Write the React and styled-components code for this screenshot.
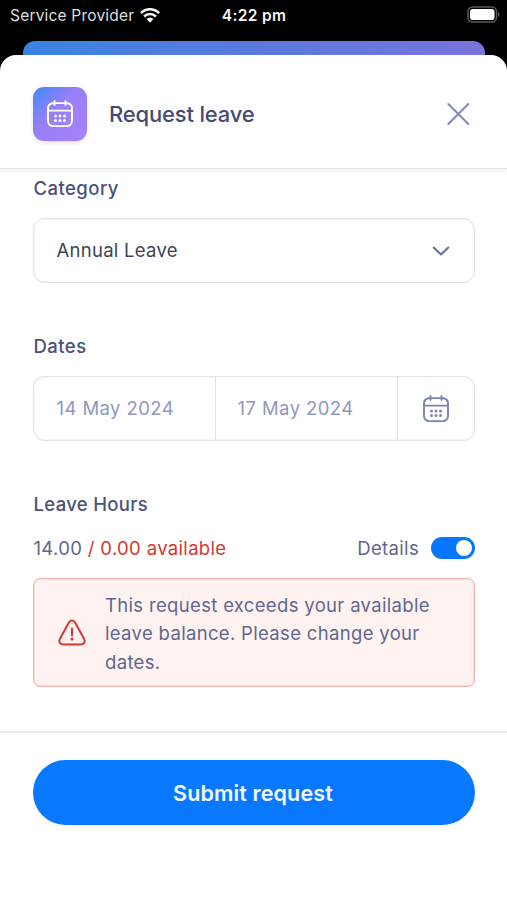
import React from "react";
import styled, { createGlobalStyle } from "styled-components";

const GlobalStyle = createGlobalStyle`
  *, *::before, *::after { box-sizing: border-box; }
  html, body { margin: 0; background: #000; }
  body, button { font-family: Inter, "Liberation Sans", sans-serif; }
`;

const Screen = styled.div`
  display: flex;
  flex-direction: column;
  height: 900px;
  overflow: hidden;
  background: #000;
`;

const StatusBar = styled.div`
  display: grid;
  grid-template-columns: 1fr auto 1fr;
  align-items: center;
  height: 30px;
  padding: 0 7px 0 10px;
  margin-bottom: 11px;
  color: #f4f4f4;
`;

const Carrier = styled.div`
  display: flex;
  align-items: center;
  gap: 6px;
  font-size: 15.5px;
  letter-spacing: 0.2px;
  line-height: 30px;
  white-space: nowrap;
  color: #dedede;
`;

const Clock = styled.div`
  font-size: 15.5px;
  font-weight: 600;
  letter-spacing: 0.35px;
  line-height: 30px;
  padding-top: 1px;
  margin-left: -2px;
`;

const Battery = styled.svg`
  justify-self: end;
  margin-top: -2px;
`;

const CardBehind = styled.div`
  flex: none;
  height: 14px;
  margin: 0 22px 0 23px;
  border-radius: 12px 12px 0 0;
  background: linear-gradient(90deg, #3983e2, #5a79dd 50%, #7974dc);
`;

const Sheet = styled.main`
  flex: 1;
  display: flex;
  flex-direction: column;
  border-radius: 16px 16px 0 0;
  background: #fff;
`;

const Header = styled.header`
  display: flex;
  align-items: center;
  flex: none;
  height: 114px;
  padding: 5px 37px 0 33px;
  border-bottom: 1px solid #e3e3e4;
  box-shadow: 0 3px 4px rgba(0, 0, 0, 0.06);
`;

const AppBadge = styled.div`
  display: grid;
  place-items: center;
  width: 54px;
  height: 54px;
  margin-right: 22px;
  border-radius: 11px;
  color: #fff;
  background: linear-gradient(135deg, #3b8cfd 0%, #977ff8 42%, #a683fb 100%);
  box-shadow: 0 2px 4px rgba(70, 40, 110, 0.14);
`;

const Title = styled.h1`
  flex: 1;
  margin: 0;
  font-size: 22px;
  font-weight: 500;
  letter-spacing: -0.18px;
  line-height: 30px;
  color: #444b73;
`;

const IconButton = styled.button`
  display: grid;
  place-items: center;
  padding: 0;
  border: 0;
  background: none;
  color: #7f88b4;
`;

const Form = styled.section`
  flex: none;
  height: 562px;
  padding: 7px 32px 0 33px;
`;

const Label = styled.h2`
  margin: 0 0 17px;
  padding-left: 0.5px;
  font-size: 18.5px;
  font-weight: 500;
  letter-spacing: ${(p) => p.$tracking || "0.45px"};
  line-height: 25px;
  color: #4b5279;
`;

const Field = styled.div`
  display: flex;
  height: 65px;
  margin-bottom: 51px;
  border: 1px solid #e3e3e9;
  border-radius: 11px;
  box-shadow: inset 0 0 0 1px #f6f6f8;
`;

const SelectValue = styled.div`
  flex: 1;
  padding-left: 22.5px;
  font-size: 18.5px;
  letter-spacing: 0.28px;
  line-height: 63px;
  color: #414355;
`;

const SelectArrow = styled.div`
  display: grid;
  place-items: center;
  width: 66px;
  color: #666ea0;
`;

const DateCell = styled.div`
  width: 182px;
  padding-left: ${(p) => (p.$end ? "21.5px" : "22.5px")};
  border-right: 1px solid #e2e2e9;
  font-size: 18.5px;
  letter-spacing: 0.42px;
  line-height: 63px;
  color: #8f98bd;
`;

const CalendarCell = styled.div`
  flex: 1;
  display: grid;
  place-items: center;
  color: #7984ae;
`;

const HoursRow = styled.div`
  display: flex;
  align-items: center;
  justify-content: space-between;
  height: 26px;
  margin: 18px 0 17px;
  padding-left: 0.5px;
  font-size: 18.5px;
  letter-spacing: 0.34px;
  color: #5f6689;
`;

const Shortage = styled.span`
  color: #d43732;
`;

const Details = styled.div`
  display: flex;
  align-items: center;
  gap: 12px;
`;

const Toggle = styled.span`
  display: flex;
  justify-content: flex-end;
  width: 44px;
  height: 22px;
  padding: 3px;
  border-radius: 11px;
  background: #0877ff;
`;

const Knob = styled.span`
  width: 16px;
  height: 16px;
  border-radius: 50%;
  background: #fff;
`;

const Alert = styled.div`
  display: flex;
  align-items: center;
  gap: 18px;
  height: 109px;
  padding: 0 23px;
  border: 1px solid #f6b3af;
  border-radius: 7px;
  background: #fff3f2;
  box-shadow: inset 0 0 0 1px #fcdcd9;
  color: #d43732;
`;

const AlertText = styled.p`
  margin: 0;
  padding-top: 2px;
  font-size: 18.5px;
  letter-spacing: 0.33px;
  line-height: 28.3px;
  white-space: nowrap;
  color: #5f6790;
`;

const Footer = styled.footer`
  flex: 1;
  padding: 27px 32px 0 33px;
  border-top: 2px solid #ebebec;
`;

const SubmitButton = styled.button`
  display: block;
  width: 100%;
  height: 65px;
  padding: 0 2px 0 0;
  border: 0;
  border-radius: 33px;
  background: #0878ff;
  color: #f4f9ff;
  font-size: 21.5px;
  font-weight: 600;
  letter-spacing: 0.13px;
`;

const CalendarIcon = () => (
  <svg width="28" height="30" viewBox="0 0 28 30" fill="none" stroke="currentColor" strokeWidth="1.9" strokeLinecap="round">
    <path d="M6.5 4.2C3.6 4.7 2 6.6 2 9.5v12c0 3.6 2 5.6 5.6 5.6h12.8c3.6 0 5.6-2 5.6-5.6v-12c0-2.9-1.6-4.8-4.5-5.3M6.5 4.2q.7-.1 1.5-.1h12q.8 0 1.5.1M2.2 11.6h23.6M8.5 2v4M19.5 2v4" />
    <g fill="currentColor" stroke="none">
      <circle cx="9.5" cy="16.9" r="1.5" /><circle cx="14" cy="16.9" r="1.5" /><circle cx="18.5" cy="16.9" r="1.5" />
      <circle cx="9.5" cy="21.4" r="1.5" /><circle cx="14" cy="21.4" r="1.5" /><circle cx="18.5" cy="21.4" r="1.5" />
    </g>
  </svg>
);

const WifiIcon = () => (
  <svg width="20" height="15" viewBox="0 0 20 15" fill="none" stroke="#f4f4f4" strokeWidth="2.5">
    <path d="M.9 5.1C6-.1 14-.1 19.1 5.1M4.1 8.5c3.3-3.3 8.5-3.3 11.8 0" />
    <path d="M6.5 11q3.5-3 7 0L10 14.7z" fill="#f4f4f4" stroke="none" />
  </svg>
);

export default function App() {
  return (
    <>
      <GlobalStyle />
      <Screen>
        <StatusBar>
          <Carrier>Service Provider <WifiIcon /></Carrier>
          <Clock>4:22 pm</Clock>
          <Battery width="33" height="17" viewBox="0 0 33 17" fill="none">
            <rect x="1" y="1" width="28.5" height="15" rx="4.5" stroke="#5a5a5a" strokeWidth="1.5" />
            <rect x="3" y="3" width="24.5" height="11" rx="2.8" fill="#fff" />
            <path d="M31 6v5q1.5-.7 1.5-2.5T31 6" fill="#5a5a5a" />
          </Battery>
        </StatusBar>
        <CardBehind />
        <Sheet>
          <Header>
            <AppBadge><CalendarIcon /></AppBadge>
            <Title>Request leave</Title>
            <IconButton aria-label="Close">
              <svg width="24" height="24" viewBox="0 0 24 24" fill="none" stroke="currentColor" strokeWidth="1.9" strokeLinecap="round">
                <path d="M2.3 2l20 20M22.3 2l-20 20" />
              </svg>
            </IconButton>
          </Header>
          <Form>
            <Label>Category</Label>
            <Field>
              <SelectValue>Annual Leave</SelectValue>
              <SelectArrow>
                <svg width="18" height="11" viewBox="0 0 18 11" fill="none" stroke="currentColor" strokeWidth="2" strokeLinecap="round" strokeLinejoin="round">
                  <path d="M1.7 2.5L9 9.5l7.3-7" />
                </svg>
              </SelectArrow>
            </Field>
            <Label>Dates</Label>
            <Field>
              <DateCell>14 May 2024</DateCell>
              <DateCell $end>17 May 2024</DateCell>
              <CalendarCell><CalendarIcon /></CalendarCell>
            </Field>
            <Label $tracking="0.32px">Leave Hours</Label>
            <HoursRow>
              <span>14.00 <Shortage>/ 0.00 available</Shortage></span>
              <Details>Details<Toggle><Knob /></Toggle></Details>
            </HoursRow>
            <Alert>
              <svg width="30" height="28" viewBox="0 0 30 28" fill="none" stroke="currentColor" strokeWidth="2" strokeLinecap="round">
                <path d="M12 3.3c1.5-2.5 4.5-2.5 6 0l9 16.5c1.6 2.9.1 5.7-3.2 5.7H6.2c-3.3 0-4.8-2.8-3.2-5.7z" />
                <path d="M15 9.5v7" />
                <circle cx="15" cy="20" r="1.5" fill="currentColor" stroke="none" />
              </svg>
              <AlertText>
                This request exceeds your available<br />
                leave balance. Please change your<br />
                dates.
              </AlertText>
            </Alert>
          </Form>
          <Footer>
            <SubmitButton>Submit request</SubmitButton>
          </Footer>
        </Sheet>
      </Screen>
    </>
  );
}
